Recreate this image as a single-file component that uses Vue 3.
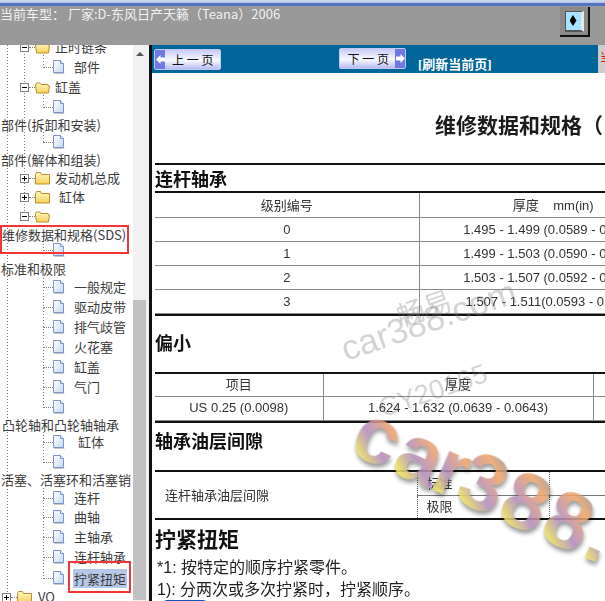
<template>
  <div class="page">
    <div class="topbar">
      <div class="strip"></div>
      <div class="topbar-body">
        <span class="car-name">当前车型： 厂家:D-东风日产天籁（Teana）2006</span>
        <button type="button" class="toggle-btn"><span class="toggle-face"><i class="diamond"></i></span></button>
      </div>
    </div>

    <div class="main">
      <div class="tree">
        <svg class="guides" width="133" height="556" viewBox="0 45 133 556">
          <line v-for="(g, i) in guides" :key="i" :x1="g[0]" :y1="g[1]" :x2="g[0]" :y2="g[2]" stroke="#808080" stroke-dasharray="1 2" />
        </svg>
        <div v-for="(r, i) in rows" :key="i" class="row" :style="rowStyle(r, i)">
          <template v-if="r.type === 'doc'">
            <span class="stub doc-stub"></span>
            <svg class="doc-icon" width="12" height="14" viewBox="0 0 12 14">
              <defs>
                <linearGradient id="docfill" x1="0" y1="0" x2="1" y2="1">
                  <stop offset="0" stop-color="#ffffff" />
                  <stop offset="1" stop-color="#c4d8f4" />
                </linearGradient>
              </defs>
              <path d="M1 13.5h10.5" stroke="#c8c8c8" fill="none" />
              <path d="M.5.5h7l3 3v9h-10z" fill="url(#docfill)" stroke="#7c92c8" />
              <path d="M7.5.5v3h3" fill="#eef3fc" stroke="#7c92c8" />
            </svg>
          </template>
          <template v-else-if="r.type === 'open' || r.type === 'closed'">
            <span class="box" :class="r.type"></span>
            <span class="stub folder-stub"></span>
            <svg class="folder-icon" width="15" height="14" viewBox="0 0 15 14">
              <defs>
                <linearGradient id="folderfill" x1="0" y1="0" x2="0" y2="1">
                  <stop offset="0" stop-color="#fff8c4" />
                  <stop offset="1" stop-color="#f8d05a" />
                </linearGradient>
              </defs>
              <path v-if="r.type === 'closed'" d="M.5 3.5l1-2h4l1 2h8v9.500h-14z" fill="url(#folderfill)" stroke="#b8912c" />
              <path v-else d="M1.500 13l-1-8 1-2h3.500l1 1.500h7l.5 1.500h1l-1 7z" fill="url(#folderfill)" stroke="#b8912c" />
            </svg>
          </template>
          <span v-if="r.label" class="label" :class="{ selected: r.selected }" :style="{ marginLeft: (r.gap || 0) + 'px' }">{{ r.label }}</span>
        </div>
        <div class="mark mark-sds"></div>
        <div class="mark mark-torque"></div>
      </div>

      <div class="scroll">
        <i class="scroll-up"></i>
        <div class="scroll-thumb"></div>
      </div>

      <div class="pane">
        <div class="navbar">
          <button type="button" class="page-btn prev">
            <i class="arrow"><svg width="9" height="9" viewBox="0 0 9 9"><path d="M0 4.500L4.500 0v2.500H9v4H4.500V9z" fill="#fff" /></svg></i>上 一 页
          </button>
          <button type="button" class="page-btn next">
            下 一 页<i class="arrow"><svg width="9" height="9" viewBox="0 0 9 9"><path d="M9 4.500L4.500 0v2.500H0v4h4.500V9z" fill="#fff" /></svg></i>
          </button>
          <a class="refresh">[刷新当前页]</a>
          <div class="navbar-side"><span>当前页</span></div>
        </div>

        <div class="doc">
          <div class="doc-title">维修数据和规格（&nbsp;SDS）</div>

          <div class="section first"><h3>连杆轴承</h3></div>
          <table class="spec grade">
            <colgroup><col style="width:264px" /><col /></colgroup>
            <tr><td>级别编号</td><td>厚度&nbsp;&nbsp;&nbsp; mm(in)</td></tr>
            <tr v-for="g in grades" :key="g[0]"><td>{{ g[0] }}</td><td>{{ g[1] }}</td></tr>
          </table>

          <div class="section small"><h3>偏小</h3></div>
          <table class="spec under">
            <colgroup><col style="width:168px" /><col style="width:270px" /><col /></colgroup>
            <tr><td>项目</td><td>厚度</td><td></td></tr>
            <tr><td>US 0.25 (0.0098)</td><td>1.624 - 1.632 (0.0639 - 0.0643)</td><td></td></tr>
          </table>

          <div class="section oil"><h3>轴承油层间隙</h3></div>
          <table class="spec clearance">
            <colgroup><col style="width:262px" /><col style="width:132px" /><col /></colgroup>
            <tr><td rowspan="2" class="oil-name">连杆轴承油层间隙</td><td class="oil-kind">标准</td><td class="oil-val"></td></tr>
            <tr><td class="oil-kind">极限</td><td class="oil-val"></td></tr>
          </table>

          <h2 class="torque">拧紧扭矩</h2>
          <p class="note">*1: 按特定的顺序拧紧零件。</p>
          <p class="note">1): 分两次或多次拧紧时，拧紧顺序。</p>
          <div class="blue-tab"></div>
        </div>

        <div class="wm wm-a">畅易</div>
        <div class="wm wm-b">car388.com</div>
        <div class="wm wm-c">CY20165</div>
        <div class="wm-color">
          <span v-for="(c, i) in letters" :key="i">{{ c }}</span>
        </div>
      </div>
    </div>
  </div>
</template>

<script setup>
const rows = [
  { y: 47, type: 'open', x: 20, label: '正时链条', gap: 5 },
  { y: 67, type: 'doc', x: 43, label: '部件', gap: 9 },
  { y: 87, type: 'open', x: 20, label: '缸盖', gap: 5 },
  { y: 107, type: 'doc', x: 43 },
  { y: 125, type: 'text', x: 1, label: '部件(拆卸和安装)' },
  { y: 142, type: 'doc', x: 43 },
  { y: 160, type: 'text', x: 1, label: '部件(解体和组装)' },
  { y: 178, type: 'closed', x: 20, label: '发动机总成', gap: 5 },
  { y: 197, type: 'closed', x: 20, label: '缸体', gap: 9 },
  { y: 216, type: 'open', x: 20 },
  { y: 235, type: 'text', x: 2, label: '维修数据和规格(SDS)' },
  { y: 250, type: 'doc', x: 43 },
  { y: 269, type: 'text', x: 1, label: '标准和极限' },
  { y: 287, type: 'doc', x: 43, label: '一般规定', gap: 9 },
  { y: 307, type: 'doc', x: 43, label: '驱动皮带', gap: 9 },
  { y: 327, type: 'doc', x: 43, label: '排气歧管', gap: 9 },
  { y: 347, type: 'doc', x: 43, label: '火花塞', gap: 9 },
  { y: 367, type: 'doc', x: 43, label: '缸盖', gap: 9 },
  { y: 387, type: 'doc', x: 43, label: '气门', gap: 9 },
  { y: 407, type: 'doc', x: 43 },
  { y: 425, type: 'text', x: 2, label: '凸轮轴和凸轮轴轴承' },
  { y: 442, type: 'doc', x: 43, label: '缸体', gap: 13 },
  { y: 462, type: 'doc', x: 43 },
  { y: 480, type: 'text', x: 1, label: '活塞、活塞环和活塞销' },
  { y: 498, type: 'doc', x: 43, label: '连杆', gap: 9 },
  { y: 517, type: 'doc', x: 43, label: '曲轴', gap: 9 },
  { y: 537, type: 'doc', x: 43, label: '主轴承', gap: 9 },
  { y: 557, type: 'doc', x: 43, label: '连杆轴承', gap: 9 },
  { y: 578, type: 'doc', x: 43, label: '拧紧扭矩', gap: 8, selected: true },
  { y: 597, type: 'closed', x: 2, label: 'VQ', gap: 6 }
]

// 树的虚线 [x, y1, y2]
const guides = [
  [7.5, 45, 592],
  [24.5, 45, 216],
  [43.5, 55, 67],
  [43.5, 95, 107],
  [43.5, 132, 142],
  [43.5, 238, 250],
  [43.5, 278, 407],
  [43.5, 432, 462],
  [43.5, 488, 578]
]

const grades = [
  ['0', '1.495 - 1.499 (0.0589 - 0.0590)'],
  ['1', '1.499 - 1.503 (0.0590 - 0.0592)'],
  ['2', '1.503 - 1.507 (0.0592 - 0.0593)'],
  ['3', '1.507 - 1.511(0.0593 - 0.0595)']
]

const letters = ['c', 'a', 'r', '3', '8', '8', '.', 'c']

const rowStyle = (r, i) => ({
  marginTop: (i === 0 ? r.y - 55 : r.y - rows[i - 1].y - 20) + 'px',
  paddingLeft: r.x + 'px'
})
</script>

<style>
html, body {
  margin: 0;
  background: #fff;
}
</style>

<style scoped>
.page {
  width: 605px;
  height: 601px;
  overflow: hidden;
  font-family: "Noto Sans CJK SC", "Liberation Sans", sans-serif;
}
.topbar {
  height: 45px;
  background: #999;
  display: flex;
  flex-direction: column;
}
.strip {
  height: 6px;
  background: linear-gradient(#cfd9f0 0, #b6c6e8 50%, #4f74c4 55%, #4f74c4 100%);
}
.topbar-body {
  flex: 1;
  display: flex;
  justify-content: space-between;
  align-items: flex-start;
  padding-right: 15px;
}
.car-name {
  color: #f0f0f0;
  font-size: 13px;
  line-height: 15px;
  white-space: nowrap;
}
.toggle-btn {
  width: 30px;
  height: 30px;
  margin-top: 1px;
  padding: 0;
  border: 0;
  background: #8a8a8a;
  border-right: 2px solid #111;
  border-bottom: 2px solid #111;
  display: flex;
  align-items: center;
  justify-content: center;
}
.toggle-face {
  width: 19px;
  height: 21px;
  box-sizing: border-box;
  background: #a8e2ff;
  border: 1px solid #555;
  border-right: 3px solid #e8e8e8;
  border-bottom: 2px solid #555;
  display: flex;
  align-items: center;
  justify-content: center;
}
.diamond {
  width: 7px;
  height: 11px;
  background: #000;
  clip-path: polygon(50% 0, 100% 50%, 50% 100%, 0 50%);
}
.main {
  height: 556px;
  display: flex;
}
.tree {
  width: 133px;
  flex: none;
  position: relative;
  overflow: hidden;
  background: #fff;
  color: #3c3c3c;
  font-size: 13px;
}
.guides {
  position: absolute;
  left: 0;
  top: 0;
}
.row {
  position: relative;
  height: 20px;
  display: flex;
  align-items: center;
  white-space: nowrap;
}
.stub {
  height: 0;
  border-top: 1px dotted #808080;
  flex: none;
}
.doc-stub {
  width: 10px;
}
.folder-stub {
  width: 6px;
}
.doc-icon,
.folder-icon {
  flex: none;
}
.box {
  width: 9px;
  height: 9px;
  box-sizing: border-box;
  border: 1px solid #808080;
  background: #fff;
  position: relative;
  flex: none;
}
.box::before {
  content: "";
  position: absolute;
  left: 1px;
  right: 1px;
  top: 3px;
  height: 1px;
  background: #000;
}
.box.closed::after {
  content: "";
  position: absolute;
  top: 1px;
  bottom: 1px;
  left: 3px;
  width: 1px;
  background: #000;
}
.label {
  line-height: 19px;
  margin-top: -2px;
}
.label.selected {
  background: #b5c7e6;
  padding: 0 1px;
  margin-top: 0;
}
.mark {
  position: absolute;
  border: 2px solid #f33535;
  box-sizing: border-box;
}
.mark-sds {
  left: 0;
  top: 180px;
  width: 129px;
  height: 29px;
}
.mark-torque {
  left: 68px;
  top: 516px;
  width: 63px;
  height: 32px;
}
.scroll {
  width: 16px;
  flex: none;
  background: #f1f1f1;
  position: relative;
}
.scroll-up {
  display: block;
  width: 0;
  height: 0;
  margin: 7px 0 0 3px;
  border-left: 4px solid transparent;
  border-right: 4px solid transparent;
  border-bottom: 4px solid #555;
}
.scroll-thumb {
  width: 13px;
  height: 300px;
  margin-top: 244px;
  background: #c1c1c1;
}
.pane {
  flex: 1;
  min-width: 0;
  position: relative;
  overflow: hidden;
  border-left: 3px solid #111;
  background: #fff;
}
.navbar {
  height: 28px;
  background: #006699;
  display: flex;
  align-items: flex-start;
}
.page-btn {
  width: 67px;
  height: 21px;
  padding: 0;
  margin-top: 4px;
  display: flex;
  align-items: center;
  justify-content: center;
  gap: 6px;
  box-sizing: border-box;
  border: 1px solid #c4c8f4;
  border-radius: 2px;
  background: linear-gradient(#c8ccf6, #f8f8ff 55%, #b8bcf0);
  color: #111;
  font-family: inherit;
  font-size: 12px;
}
.page-btn .arrow {
  width: 10px;
  align-self: stretch;
  background: #7078e4;
  display: flex;
  align-items: center;
  justify-content: center;
}
.prev {
  margin-left: 2px;
  justify-content: flex-start;
  gap: 7px;
}
.next {
  margin-left: 118px;
  margin-top: 3px;
  justify-content: flex-end;
}
.refresh {
  margin-left: 12px;
  margin-top: 12px;
  color: #fff;
  font-family: "Liberation Serif", "Noto Sans CJK SC", serif;
  font-weight: bold;
  font-size: 13px;
  line-height: 15px;
  white-space: nowrap;
}
.navbar-side {
  margin-left: auto;
  width: 7px;
  height: 28px;
  background: #ccc;
  overflow: hidden;
  padding-left: 2px;
  box-sizing: border-box;
  color: #f00;
  font-size: 12px;
  line-height: 24px;
  white-space: nowrap;
}
.doc {
  padding-left: 3px;
  filter: blur(0.3px);
  color: #222;
}
.doc-title {
  height: 90px;
  padding: 39px 0 0 280px;
  box-sizing: border-box;
  font-size: 21px;
  line-height: 25px;
  font-weight: bold;
  white-space: nowrap;
  color: #1c1c1c;
}
.section {
  width: 532px;
  border-top: 2px solid #111;
  box-sizing: border-box;
}
.section h3 {
  margin: 0;
  font-size: 18px;
  line-height: 24px;
  font-weight: bold;
  color: #111;
}
.section.first {
  height: 28px;
  padding-top: 1px;
}
.section.small {
  height: 58px;
  padding-top: 14px;
}
.section.oil {
  height: 49px;
  padding-top: 5px;
}
.spec {
  width: 532px;
  table-layout: fixed;
  border-collapse: collapse;
  font-family: "Liberation Sans", "Noto Sans CJK SC", sans-serif;
  font-size: 13px;
  color: #333;
  text-align: center;
  border-top: 2px solid #111;
}
.spec td {
  padding: 0;
  border-left: 1px solid #888;
  border-bottom: 1px solid #8c8c8c;
}
.spec td:first-child {
  border-left: 0;
}
.grade tr {
  height: 24px;
}
.grade tr:nth-child(1) {
  height: 26px;
}
.grade tr:nth-child(2) {
  height: 25px;
}
.under tr {
  height: 24px;
}
.under td {
  padding-bottom: 2px;
}
.clearance tr {
  height: 24px;
}
.clearance td {
  padding-bottom: 2px;
  border-left: 1px dotted #666;
  border-bottom: 1px solid #777;
}
.clearance td.oil-name {
  text-align: left;
  padding-left: 10px;
  border-left: 0;
  border-bottom: 2px solid #111;
}
.clearance td.oil-kind {
  text-align: left;
  padding-left: 9px;
  border-left: 1px dotted #555;
}
.clearance tr:last-child td {
  border-bottom: 2px solid #111;
}
.torque {
  margin: 5px 0 5px;
  font-size: 21px;
  line-height: 27px;
  font-weight: bold;
  color: #111;
}
.note {
  margin: 0;
  padding-left: 2px;
  font-family: "Liberation Sans", "Noto Sans CJK SC", sans-serif;
  font-size: 16px;
  line-height: 22px;
  color: #222;
  white-space: nowrap;
}
.blue-tab {
  width: 44px;
  height: 10px;
  margin: -1px 0 0 8px;
  background: #1a52b4;
  border-radius: 4px 4px 0 0;
}
.wm {
  position: absolute;
  color: rgba(120, 120, 120, 0.32);
  font-family: "Liberation Sans", "Noto Sans CJK SC", sans-serif;
  white-space: nowrap;
  transform-origin: left center;
  transform: rotate(-19deg);
}
.wm-a {
  left: 245px;
  top: 251px;
  font-size: 28px;
}
.wm-b {
  left: 190px;
  top: 285px;
  font-size: 35px;
}
.wm-c {
  left: 228px;
  top: 349px;
  font-size: 27px;
}
.wm-color {
  position: absolute;
  left: 206px;
  top: 340px;
  display: flex;
  transform-origin: left center;
  transform: rotate(24deg);
  font-family: "Liberation Sans", sans-serif;
  font-weight: bold;
  font-size: 80px;
  line-height: 84px;
  filter: drop-shadow(2px 3px 2px rgba(0, 0, 0, 0.45));
  opacity: 0.88;
}
.wm-color span {
  margin-right: 2px;
  color: transparent;
  background: linear-gradient(35deg, #efe05a 0, #e8dc60 22%, #b08cc0 42%, #f0a468 68%, #8494ac 90%);
  -webkit-background-clip: text;
  background-clip: text;
}
.wm-color span:nth-child(2) {
  margin-right: -3px;
}
.wm-color span:nth-child(3) {
  margin-right: -4px;
}
</style>
